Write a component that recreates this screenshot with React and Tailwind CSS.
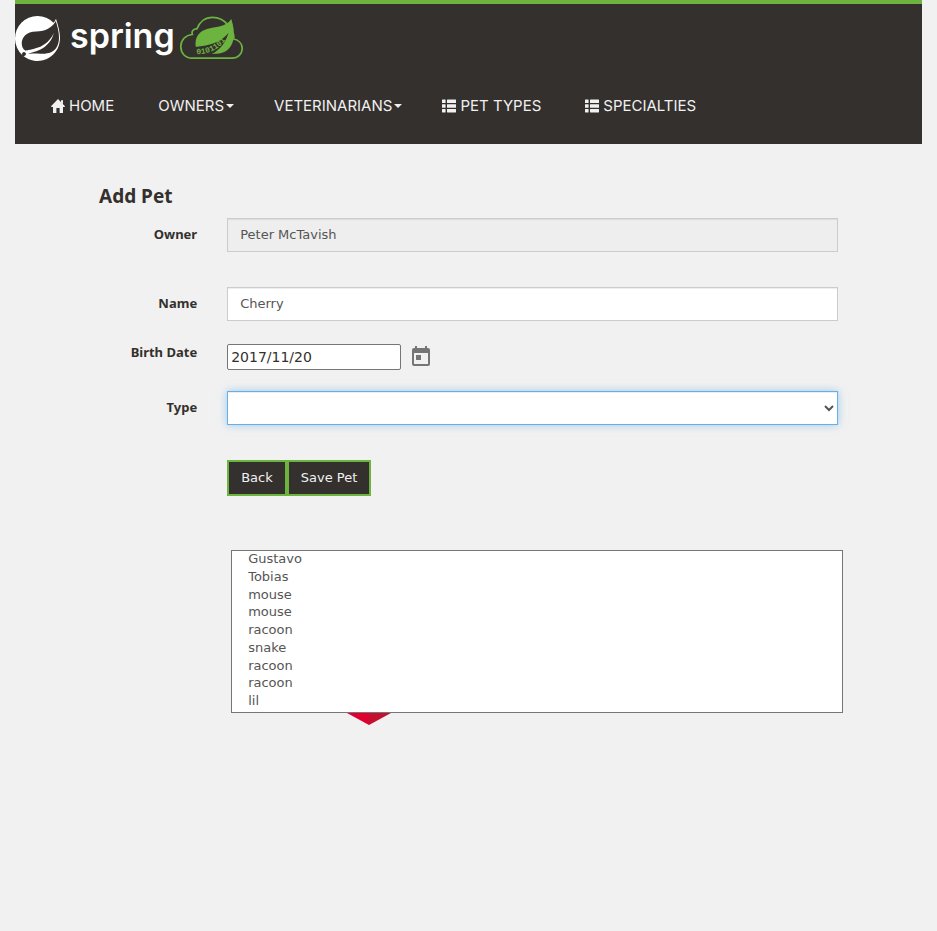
import React from "react";
import { SiSpring } from "react-icons/si";
import { MdToday } from "react-icons/md";

const petTypes = ["Gustavo", "Tobias", "mouse", "mouse", "racoon", "snake", "racoon", "racoon", "lil"];

function HomeIcon() {
  return (
    <svg className="size-[14px] shrink-0" viewBox="0 0 14 14" fill="currentColor" aria-hidden="true">
      <path d="M7 0 L14 7.2 L13.6 8 H12 V13.5 Q12 14 11.5 14 H8.6 V9 H5.4 V14 H2.5 Q2 14 2 13.5 V8 H0.4 L0 7.2 Z M10 1.2 H12 V5 L10 3 Z" />
    </svg>
  );
}

function ListIcon() {
  return (
    <svg className="size-[14px] shrink-0" viewBox="0 0 14 14" fill="currentColor" aria-hidden="true">
      <rect x="0" y="0.5" width="3.6" height="3.6" rx="0.4" />
      <rect x="5" y="0.5" width="9" height="3.6" rx="0.4" />
      <rect x="0" y="5.2" width="3.6" height="3.6" rx="0.4" />
      <rect x="5" y="5.2" width="9" height="3.6" rx="0.4" />
      <rect x="0" y="9.9" width="3.6" height="3.6" rx="0.4" />
      <rect x="5" y="9.9" width="9" height="3.6" rx="0.4" />
    </svg>
  );
}

function Caret() {
  return (
    <svg className="ml-0.5 h-1 w-2 shrink-0" viewBox="0 0 8 4" fill="currentColor" aria-hidden="true">
      <path d="M0 0H8L4 4Z" />
    </svg>
  );
}

function CloudLogo() {
  return (
    <svg className="ml-1 h-11 w-16 shrink-0" viewBox="0 0 64 44" aria-hidden="true">
      <path
        d="M13 42.200 C6 42.200 1.800 37 1.800 30.500 C1.800 24 6.500 19 13.500 18.500 C12 15.500 14.500 12.500 18 12.800 C20.500 5.500 26.500 1.300 33.500 1.300 C40 1.300 45 4 49 9 L54.500 18.500 C54.900 20 54.900 21.500 54.600 23 C60 24 63.200 28 63.200 32.500 C63.200 38 59 42.200 53 42.200 Z"
        fill="none"
        stroke="#6db33f"
        strokeWidth="1.7"
        strokeLinejoin="round"
      />
      <path
        d="M52.300 3 C54.500 10 55.800 17 54.300 24 C52 33 46 37.700 37 37.700 H20 C18 36 16.500 32 16.500 28 C16.500 20 21 15 28 13 C36 10.500 47 11.500 52.300 3 Z"
        fill="#6db33f"
      />
      <path
        d="M49.500 17 C42 26 32 29.500 16 31 V39 H29 C38 37 46 29 49.500 17 Z"
        fill="#34302d"
      />
      <path id="digits" d="M17.500 38.200 C30 38.500 41 33 48.500 21" fill="none" />
      <text fontSize="8" fontWeight="700" fill="#6db33f" className="font-['Liberation_Mono',monospace]">
        <textPath href="#digits">0101101</textPath>
      </text>
    </svg>
  );
}

function Row({ label, htmlFor, children, className }) {
  return (
    <div className={"flex items-start " + className}>
      <label
        htmlFor={htmlFor}
        className="w-1/6 shrink-0 pt-1.5 pr-[15px] text-right font-['Noto_Sans',sans-serif] text-[13px] leading-5 font-bold"
      >
        {label}
      </label>
      <div className="relative min-w-0 flex-1 px-[15px]">{children}</div>
    </div>
  );
}

const fieldClass =
  "block h-[34px] w-full border border-[#ccc] px-3 pb-0.5 text-[13px] text-[#555] shadow-[inset_0_1px_1px_rgba(0,0,0,0.075)] outline-none";

export default function App() {
  return (
    <div className="min-h-screen bg-[#f1f1f1] px-[15px] font-['DejaVu_Sans',sans-serif] text-[13px] text-[#34302d]">
      <header className="h-36 border-t-4 border-[#6db33f] bg-[#34302d] text-[#f1f1f1]">
        <a href="#home" className="flex h-[68px] items-start pt-3 text-white">
          <SiSpring className="size-[45px] shrink-0" aria-hidden="true" />
          <span className="ml-2.5 font-['Inter',sans-serif] text-[34px] font-semibold leading-10">spring</span>
          <CloudLogo />
        </a>
        <nav className="flex items-center gap-10 pt-6 pl-9 font-['Inter',sans-serif] text-[15px] leading-5">
          <a href="#home" className="flex items-center gap-1 pr-1"><HomeIcon />HOME</a>
          <button type="button" className="flex items-center">OWNERS<Caret /></button>
          <button type="button" className="flex items-center">VETERINARIANS<Caret /></button>
          <a href="#types" className="flex items-center gap-1 pr-1"><ListIcon />PET TYPES</a>
          <a href="#specialties" className="flex items-center gap-1"><ListIcon />SPECIALTIES</a>
        </nav>
      </header>

      <main className="mx-auto max-w-[769px] pt-10">
        <h2 className="pl-[15px] font-['Noto_Sans',sans-serif] text-[19px] leading-6 font-bold">Add Pet</h2>
        <form onSubmit={(e) => e.preventDefault()} className="pt-2.5">
          <Row label="Owner" htmlFor="owner" className="">
            <input id="owner" readOnly defaultValue="Peter McTavish" className={fieldClass + " bg-[#eee]"} />
          </Row>
          <Row label="Name" htmlFor="name" className="mt-[35px]">
            <input id="name" defaultValue="Cherry" className={fieldClass + " bg-white"} />
          </Row>
          <Row label="Birth Date" htmlFor="birth" className="mt-[15px]">
            <div className="flex items-center gap-2 pt-2">
              <input
                id="birth"
                defaultValue="2017/11/20"
                className="h-[26px] w-[174px] rounded-xs border border-[#767676] bg-white px-[3px] text-sm outline-none"
              />
              <button type="button" aria-label="Open calendar" className="text-[#757575]">
                <MdToday className="size-6" />
              </button>
            </div>
          </Row>
          <Row label="Type" htmlFor="type" className="mt-[21px]">
            <select
              id="type"
              className="block h-[34px] w-full border border-[#66afe9] bg-white px-3 text-[13px] text-[#555] shadow-[inset_0_1px_1px_rgba(0,0,0,0.075),0_0_8px_rgba(102,175,233,0.6)] outline-none"
            />
            <ul
              role="listbox"
              aria-label="Pet types"
              className="absolute top-[159px] right-2.5 left-[19px] z-10 grid h-[163px] auto-rows-fr border border-[#767676] bg-white pb-px pl-4 text-[13px] leading-4 text-[#555]"
            >
              {petTypes.map((name, i) => (
                <li key={i} role="option" aria-selected="false">{name}</li>
              ))}
            </ul>
          </Row>
          <div className="mt-[35px] ml-[calc(100%/6)] flex px-[15px]">
            <button type="button" className="h-9 border-2 border-[#6db33f] bg-[#34302d] px-3 text-[#f1f1f1]">Back</button>
            <button type="submit" className="h-9 border-2 border-[#6db33f] bg-[#34302d] px-3 text-[#f1f1f1]">Save Pet</button>
          </div>
        </form>
        <div className="mt-[217px] ml-[calc(100%/6)] pl-[135px]">
          <svg className="h-3 w-11" viewBox="0 0 44 12" aria-hidden="true">
            <path d="M0 0H22V12Z" fill="#dd0031" />
            <path d="M22 0H44L22 12Z" fill="#c3102f" />
          </svg>
        </div>
      </main>
    </div>
  );
}
